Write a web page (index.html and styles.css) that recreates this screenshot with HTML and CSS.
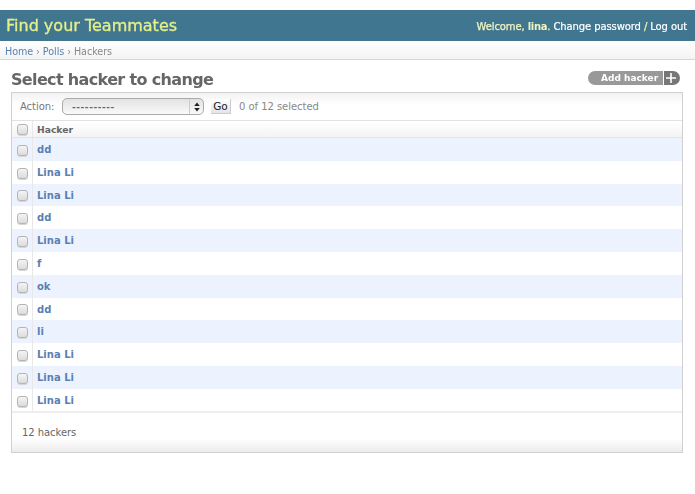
FILE: index.html
```html
<!DOCTYPE html>
<html lang="en">
<head>
<meta charset="utf-8">
<title>Select hacker to change</title>
<link rel="stylesheet" href="styles.css">
</head>
<body>
<header class="site-header">
  <h1 class="brand">Find your Teammates</h1>
  <div class="user-tools">Welcome, <strong>lina</strong>. <a href="#">Change password</a> / <a href="#">Log out</a></div>
</header>
<nav class="crumbs"><a href="#">Home</a> › <a href="#">Polls</a> › Hackers</nav>
<main class="content">
  <div class="title-row">
    <h2 class="page-title">Select hacker to change</h2>
    <a class="add-btn" href="#"><span class="add-label">Add hacker</span><span class="add-plus"><svg viewBox="0 0 12 12" width="12" height="12"><path d="M6 1v10M1 6h10" stroke="#fff" stroke-width="1.600" fill="none"/></svg></span></a>
  </div>
  <section class="module">
    <div class="actions">
      <span class="action-label">Action:</span>
      <span class="select"><span class="select-text">----------</span><span class="select-arrows"><svg viewBox="0 0 8 12" width="8" height="12"><path d="M4 1.5L6.8 5H1.2zM4 10.5L1.2 7h5.600z" fill="#222"/></svg></span></span>
      <span class="go">Go</span>
      <span class="counter">0 of 12 selected</span>
    </div>
    <div class="row head"><span class="check-cell"><span class="check"></span></span><span class="name">Hacker</span></div>
    <div class="row odd"><span class="check-cell"><span class="check"></span></span><a class="name" href="#">dd</a></div>
    <div class="row"><span class="check-cell"><span class="check"></span></span><a class="name" href="#">Lina Li</a></div>
    <div class="row odd"><span class="check-cell"><span class="check"></span></span><a class="name" href="#">Lina Li</a></div>
    <div class="row"><span class="check-cell"><span class="check"></span></span><a class="name" href="#">dd</a></div>
    <div class="row odd"><span class="check-cell"><span class="check"></span></span><a class="name" href="#">Lina Li</a></div>
    <div class="row"><span class="check-cell"><span class="check"></span></span><a class="name" href="#">f</a></div>
    <div class="row odd"><span class="check-cell"><span class="check"></span></span><a class="name" href="#">ok</a></div>
    <div class="row"><span class="check-cell"><span class="check"></span></span><a class="name" href="#">dd</a></div>
    <div class="row odd"><span class="check-cell"><span class="check"></span></span><a class="name" href="#">li</a></div>
    <div class="row"><span class="check-cell"><span class="check"></span></span><a class="name" href="#">Lina Li</a></div>
    <div class="row odd"><span class="check-cell"><span class="check"></span></span><a class="name" href="#">Lina Li</a></div>
    <div class="row"><span class="check-cell"><span class="check"></span></span><a class="name" href="#">Lina Li</a></div>
    <div class="paginator">12 hackers</div>
  </section>
</main>
</body>
</html>
```
FILE: styles.css
```css
* { box-sizing: border-box; }
html, body { margin: 0; height: 100%; overflow: hidden; }
body {
  background: #fff;
  padding-top: 10px;
  font-family: "DejaVu Sans", "Liberation Sans", sans-serif;
  font-size: 10px;
  color: #666;
  filter: blur(0.3px);
}
a { text-decoration: none; color: inherit; }
.site-header {
  height: 31px;
  background: #417690;
  display: flex;
  align-items: center;
  justify-content: space-between;
  padding: 0 8px 0 6px;
}
.brand {
  margin: 0;
  font-size: 16px;
  font-weight: 400;
  color: #e6f08a;
  -webkit-text-stroke: 0.3px #e6f08a;
}
.user-tools {
  padding-top: 2px;
  font-size: 10px;
  color: #f0f4c0;
  letter-spacing: -0.1px;
  -webkit-text-stroke: 0.25px #f0f4c0;
}
.user-tools a { color: #fff; -webkit-text-stroke: 0.2px #fff; }
.user-tools strong { color: #f0f4c0; font-weight: 700; letter-spacing: -0.3px; -webkit-text-stroke: 0; }
.crumbs {
  height: 19px;
  padding: 2px 0 0 5px;
  line-height: 17px;
  font-size: 9.600px;
  letter-spacing: -0.06px;
  color: #888;
  background: linear-gradient(#fff, #f3f3f3);
  border-bottom: 1px solid #d6d6d6;
}
.crumbs a { color: #5b80b2; }
.content { padding: 0 12px 0 11px; }
.title-row {
  height: 32px;
  display: flex;
  align-items: flex-start;
  justify-content: space-between;
}
.page-title {
  margin: 10px 0 0;
  font-size: 16px;
  line-height: 20px;
  font-weight: 700;
  color: #666;
  letter-spacing: -0.65px;
}
.add-btn {
  display: flex;
  margin: 11px 3px 0 0;
  height: 14px;
  font-size: 9px;
  font-weight: 700;
  color: #fff;
}
.add-label {
  width: 75px;
  padding-left: 13px;
  line-height: 14px;
  background: #999;
  border-radius: 7px 0 0 7px;
  white-space: nowrap;
}
.add-plus {
  width: 16px;
  margin-left: 1px;
  background: #777;
  border-radius: 0 7px 7px 0;
  display: flex;
  align-items: center;
  justify-content: center;
  padding-right: 2px;
}
.module {
  height: 361px;
  border: 1px solid #d0d0d0;
  display: flex;
  flex-direction: column;
}
.actions {
  height: 28px;
  flex: none;
  display: flex;
  align-items: center;
  padding-left: 8px;
  background: linear-gradient(#f2f2f2, #fff 45%, #fff);
  border-bottom: 1px solid #e2e2e2;
  color: #777;
}
.action-label { width: 42px; letter-spacing: -0.05px; }
.select {
  width: 142px;
  height: 17px;
  display: flex;
  border: 1px solid #aaa;
  border-radius: 5px;
  background: linear-gradient(#e2e2e2, #fafafa);
  font-size: 9px;
  color: #666;
}
.select-text { flex: 1; padding-left: 9px; line-height: 16px; font-weight: 700; letter-spacing: 0.55px; }
.select-arrows {
  width: 14px;
  display: flex;
  align-items: center;
  justify-content: center;
  border-left: 1px solid #ccc;
}
.go {
  margin-left: 7px;
  width: 20px;
  height: 15px;
  line-height: 15px;
  text-align: center;
  background: linear-gradient(#fff, #e4e4e4);
  border-right: 1px solid #ccc;
  border-bottom: 1px solid #ccc;
  color: #222;
  font-size: 10.500px;
}
.counter { margin-left: 8px; color: #888; letter-spacing: -0.04px; }
.row {
  height: 22.8px;
  flex: none;
  display: flex;
  align-items: stretch;
  background: #fff;
}
.row.odd { background: #edf3fe; }
.row.head {
  height: 17px;
  background: linear-gradient(#fff, #f4f4f4);
  border-bottom: 1px solid #e4e4e4;
}
.check-cell {
  width: 21px;
  flex: none;
  display: flex;
  align-items: center;
  justify-content: center;
  border-right: 1px solid #e8e8e8;
  padding-top: 2px;
}
.head .check-cell { padding-top: 1px; }
.check {
  width: 11px;
  height: 11px;
  border: 1px solid #b4b4b4;
  border-radius: 3px;
  background: linear-gradient(#f4f4f4, #dcdcdc);
  box-shadow: 0 1px 0 #d8d8d8;
}
.name {
  padding-left: 4px;
  font-size: 10px;
  font-weight: 700;
  color: #5b80b2;
  line-height: 23px;
}
.head .name { font-size: 9.200px; color: #666; line-height: 17px; }
.paginator {
  flex: 1;
  margin-top: -1px;
  border-top: 2px solid #eee;
  padding: 13px 0 0 10px;
  font-size: 10px;
  line-height: 14px;
  color: #666;
  letter-spacing: -0.05px;
  background: linear-gradient(#fff 65%, #ececec);
}
```
